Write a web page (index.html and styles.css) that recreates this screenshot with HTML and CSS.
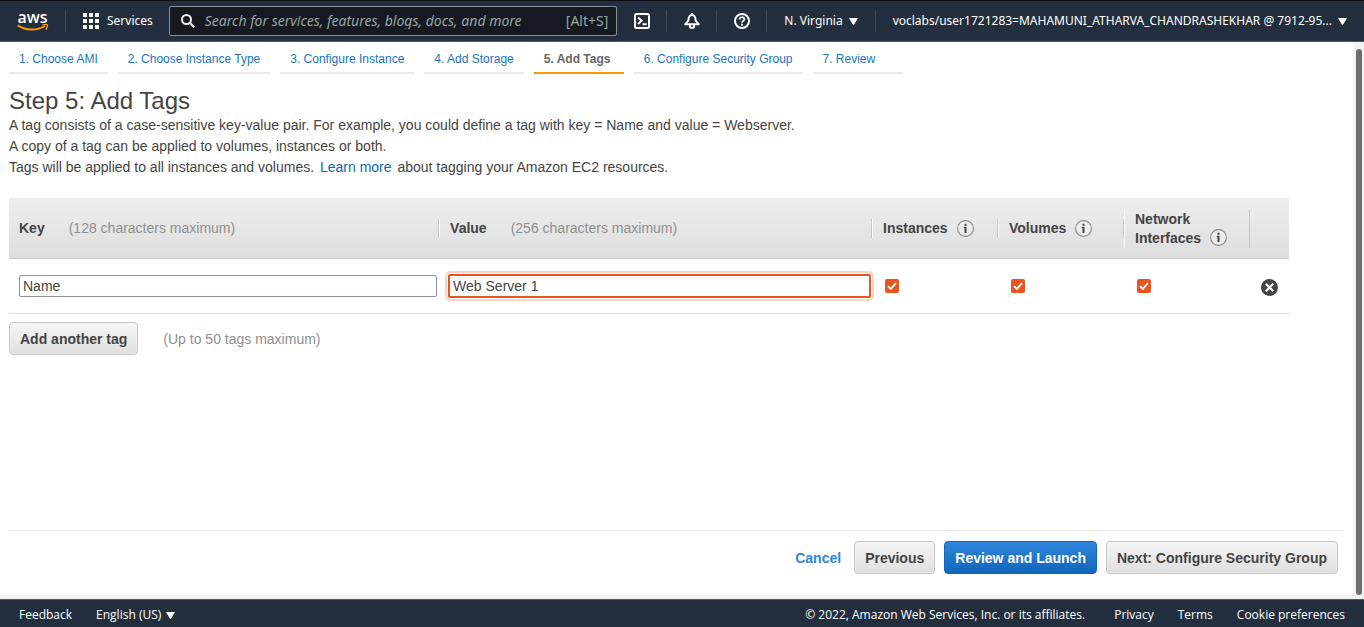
FILE: index.html
```html
<!DOCTYPE html>
<html lang="en">
<head>
<meta charset="utf-8">
<title>Step 5: Add Tags</title>
<link rel="stylesheet" href="styles.css">
</head>
<body>
<svg class="defs" aria-hidden="true">
  <symbol id="info" viewBox="0 0 17 17">
    <circle cx="8.500" cy="8.500" r="7.900" fill="#ececec" stroke="#8c8c8c" stroke-width="1.100"/>
    <path d="M7.500 3.800h2v1.900h-2zM6.900 6.800h2.600v6.200h-2v-5h-.6z" fill="#444"/>
  </symbol>
  <symbol id="caret" viewBox="0 0 9 7"><path d="M0 0h9L5.200 6.500q-.7.800-1.400 0z" fill="currentColor"/></symbol>
</svg>

<header class="topbar">
  <a class="logo" href="#" aria-label="AWS home">
    <svg width="32" height="30" viewBox="0 0 32 30">
      <text x="15.500" y="17" text-anchor="middle" class="logo-text">aws</text>
      <path d="M.8 19.300c8.300 5.500 19 5.600 27.400.7" fill="none" stroke="#f90" stroke-width="2"/>
      <path d="M25.400 19.300c1.700-1 4.100-1 5-.5.400 1.200-.3 3.800-1.800 5" fill="none" stroke="#f90" stroke-width="1.300"/>
    </svg>
  </a>
  <button class="nav-item services">
    <svg width="16" height="16" viewBox="0 0 16 16" fill="#fff"><path d="M0 0h4v4H0zM6 0h4v4H6zM12 0h4v4h-4zM0 6h4v4H0zM6 6h4v4H6zM12 6h4v4h-4zM0 12h4v4H0zM6 12h4v4H6zM12 12h4v4h-4z"/></svg>
    <span>Services</span>
  </button>
  <label class="search">
    <svg width="14" height="14" viewBox="0 0 14 14" fill="none" stroke="#eaeded" stroke-width="2"><circle cx="5.500" cy="5.500" r="4.500"/><path d="M8.800 8.800l4.400 4.400"/></svg>
    <input type="search" aria-label="Search" placeholder="Search for services, features, blogs, docs, and more">
    <span class="shortcut">[Alt+S]</span>
  </label>
  <button class="nav-item icon-item first" aria-label="CloudShell">
    <svg width="16" height="16" viewBox="0 0 16 16" fill="none" stroke="#fff" stroke-width="2"><rect x="1" y="1" width="14" height="14" rx="1.500"/><path d="M4 4.600l3.600 3.200L4 11M8.600 11.300h4"/></svg>
  </button>
  <button class="nav-item icon-item" aria-label="Notifications">
    <svg width="16" height="16" viewBox="0 0 16 16" fill="none" stroke="#fff" stroke-width="1.900"><path d="M1.200 11.200h13.600L11.600 7.600C11.600 4.400 10.400 2 8 2S4.400 4.400 4.400 7.600z" stroke-linejoin="round"/><path d="M8 0v2.400M5.900 11.500v1.700q0 1.700 2.100 1.700t2.100-1.700v-1.700"/></svg>
  </button>
  <button class="nav-item icon-item" aria-label="Help">
    <svg width="16" height="16" viewBox="0 0 16 16" fill="none" stroke="#fff" stroke-width="2"><circle cx="8" cy="8" r="7"/><path d="M5.600 6.500c0-3 4.800-3 4.800-.2C10.400 8 8 7.800 8 9.800M8 10.800v1.900" stroke-width="1.700"/></svg>
  </button>
  <button class="nav-item menu">N. Virginia <svg width="9" height="7"><use href="#caret"/></svg></button>
  <button class="nav-item menu">voclabs/user1721283=MAHAMUNI_ATHARVA_CHANDRASHEKHAR @ 7912-95... <svg width="9" height="7"><use href="#caret"/></svg></button>
</header>

<div class="body-row">
  <main class="page">
    <nav class="steps">
      <a href="#">1. Choose AMI</a>
      <a href="#">2. Choose Instance Type</a>
      <a href="#">3. Configure Instance</a>
      <a href="#">4. Add Storage</a>
      <a href="#" class="current" aria-current="step">5. Add Tags</a>
      <a href="#">6. Configure Security Group</a>
      <a href="#">7. Review</a>
    </nav>
    <h1>Step 5: Add Tags</h1>
    <p>A tag consists of a case-sensitive key-value pair. For example, you could define a tag with key = Name and value = Webserver.</p>
    <p>A copy of a tag can be applied to volumes, instances or both.</p>
    <p>Tags will be applied to all instances and volumes. <a class="learn" href="#">Learn more</a> about tagging your Amazon EC2 resources.</p>

    <table class="tags">
      <colgroup><col class="key-col"><col><col class="check-col"><col class="check-col"><col class="check-col"><col class="remove-col"></colgroup>
      <thead>
        <tr>
          <th><div class="head first"><span>Key</span><span class="hint">(128 characters maximum)</span></div></th>
          <th><div class="head"><span>Value</span><span class="hint">(256 characters maximum)</span></div></th>
          <th><div class="head">Instances<svg class="info" width="17" height="17"><use href="#info"/></svg></div></th>
          <th><div class="head">Volumes<svg class="info" width="17" height="17"><use href="#info"/></svg></div></th>
          <th><div class="head two-line"><span>Network<br>Interfaces</span><svg class="info" width="17" height="17"><use href="#info"/></svg></div></th>
          <th></th>
        </tr>
      </thead>
      <tbody>
        <tr>
          <td class="key-cell"><input class="field" type="text" aria-label="Key" value="Name"></td>
          <td class="value-cell"><input class="field active" type="text" aria-label="Value" value="Web Server 1"></td>
          <td class="check-cell"><input class="check" type="checkbox" aria-label="Instances" checked></td>
          <td class="check-cell"><input class="check" type="checkbox" aria-label="Volumes" checked></td>
          <td class="check-cell"><input class="check" type="checkbox" aria-label="Network Interfaces" checked></td>
          <td class="remove-cell"><button class="remove" aria-label="Remove tag"><svg width="17" height="17" viewBox="0 0 17 17"><circle cx="8.500" cy="8.500" r="8.500" fill="#444"/><path d="M4.800 4.800l7.400 7.400M12.200 4.800l-7.400 7.400" stroke="#fff" stroke-width="2.200"/></svg></button></td>
        </tr>
      </tbody>
    </table>
    <div class="add-row">
      <button class="btn">Add another tag</button>
      <span class="hint">(Up to 50 tags maximum)</span>
    </div>

    <div class="actions">
      <a class="cancel" href="#">Cancel</a>
      <button class="btn">Previous</button>
      <button class="btn primary">Review and Launch</button>
      <button class="btn">Next: Configure Security Group</button>
    </div>
  </main>
  <div class="scroll-track"><div class="scroll-thumb"></div></div>
</div>

<footer class="footer">
  <a href="#">Feedback</a>
  <button class="language">English (US) <svg width="9" height="7"><use href="#caret"/></svg></button>
  <span class="copyright">© 2022, Amazon Web Services, Inc. or its affiliates.</span>
  <a href="#">Privacy</a>
  <a href="#">Terms</a>
  <a href="#">Cookie preferences</a>
</footer>
</body>
</html>
```

FILE: styles.css
```css
* { box-sizing: border-box; }

body {
  margin: 0;
  min-height: 100vh;
  display: flex;
  flex-direction: column;
  background: #fff;
  color: #444;
  font: 14px/21px "Liberation Sans", Arial, sans-serif;
}

button, input { font: inherit; color: inherit; margin: 0; }
button { cursor: pointer; }
a { color: #1166bb; text-decoration: none; }
svg { flex: none; }
.defs { display: none; }

/* top bar */
.topbar {
  display: flex;
  align-items: center;
  height: 42px;
  background: #232f3e;
  border-top: 1px solid #0c0d0f;
  border-bottom: 1px solid #4c5661;
  color: #fff;
  font: 12px/16px "Noto Sans", sans-serif;
}
.logo { display: flex; padding: 0 16px 0 17px; }
.logo svg { overflow: visible; }
.logo-text { font: 600 16px "Open Sans", sans-serif; fill: #fff; }
.nav-item {
  display: flex;
  align-items: center;
  gap: 6px;
  height: 22px;
  padding: 0 16px 0 17px;
  border: 0;
  border-left: 1px solid #414b58;
  background: none;
  white-space: nowrap;
}
.nav-item.services { gap: 8px; }
.nav-item.first { border-left-color: transparent; padding-left: 16px; }
.nav-item.menu { padding-right: 17px; }
.search {
  flex: 1;
  display: flex;
  align-items: center;
  gap: 10px;
  min-width: 0;
  height: 30px;
  padding: 0 8px 0 11px;
  border: 1px solid #879196;
  border-radius: 2px;
  background: #16191f;
  color: #95a5a6;
  font-size: 14px;
}
.search input {
  flex: 1;
  min-width: 0;
  padding: 0;
  border: 0;
  outline: 0;
  background: none;
}
.search input::placeholder { color: #95a5a6; font-style: italic; opacity: 1; }

/* page */
.body-row { flex: 1; display: flex; border-bottom: 4px solid #f2f3f3; }
.page {
  flex: 1;
  min-width: 0;
  display: flex;
  flex-direction: column;
  padding: 6px 10px 21px 9px;
}
.scroll-track { width: 11px; padding: 7px 2px 0 3px; background: #f2f3f3; display: flex; }
.scroll-thumb { flex: 1; border-radius: 3px; background: #6e6e6e; }

.steps { display: flex; gap: 10px; font-size: 12px; line-height: 22px; }
.steps a {
  min-width: 90px;
  height: 26px;
  padding: 0 10px;
  border-bottom: 2px solid #eaeaea;
  color: #1b75bc;
  white-space: nowrap;
}
.steps .current { border-color: #ff9900; color: #666; font-weight: bold; }

h1 { margin: 13px 0 1px; font-size: 24px; line-height: 27px; font-weight: normal; }
p { margin: 0; }
.learn { margin: 0 2px; }

.tags { width: calc(100% - 54px); margin-top: 20px; border-collapse: collapse; table-layout: fixed; }
.key-col { width: 33.6%; }
.check-col { width: 126px; }
.remove-col { width: 39px; }
.tags th {
  height: 60px;
  padding: 2px 0 0;
  border-bottom: 1px solid #c8c8c8;
  text-align: left;
  line-height: 19px;
}
.tags thead tr { background: linear-gradient(#eee, #dedede); }
.head {
  display: flex;
  align-items: center;
  height: 19px;
  padding-left: 10px;
  border-left: 1px solid #fff;
  border-right: 1px solid #c4c4c4;
}
.head.first { border-left: 0; }
.head.two-line { height: 38px; align-items: flex-end; }
.hint { color: #8f8f8f; font-weight: normal; }
.head .hint { margin-left: 24px; }
.info { margin-left: 9px; }
.two-line .info { margin-bottom: 2px; }
.tags td { height: 55px; padding: 0; border-bottom: 1px solid #ddd; vertical-align: middle; }
.tags .key-cell { padding: 0 2px 0 10px; }
.tags .value-cell { padding: 0 1px 0 9px; }
.tags .check-cell { padding-left: 13px; }
.tags .remove-cell { padding-left: 11px; }
.field {
  display: block;
  width: 100%;
  height: 22px;
  padding: 0 3px;
  border: 1px solid #8f8f9d;
  border-radius: 2px;
  background: #fff;
}
.field.active {
  height: 24px;
  border: 2px solid #e95420;
  outline: 0;
  box-shadow: 0 0 0 1px #fff, 0 0 0 3px #fbd4c7;
}
.check {
  appearance: none;
  display: block;
  width: 14px;
  height: 14px;
  border-radius: 2px;
  background: #e95420 url("data:image/svg+xml,%3Csvg xmlns='http://www.w3.org/2000/svg' viewBox='0 0 14 14'%3E%3Cpath d='M3 7.200l2.800 2.700L11 4.200' fill='none' stroke='white' stroke-width='2'/%3E%3C/svg%3E");
}
.remove { display: flex; padding: 3px 0 0; border: 0; background: none; }

.btn {
  height: 33px;
  padding: 2px 10px 0;
  border: 1px solid #c3c3c3;
  border-radius: 4px;
  background: linear-gradient(#f5f5f5, #dfdfdf);
  box-shadow: inset 0 0 0 1px #ffffff55;
  font-weight: bold;
  white-space: nowrap;
}
.btn.primary {
  border-color: #1166bb;
  background: linear-gradient(#2f86dc, #1166bb);
  box-shadow: none;
  color: #fff;
}
.add-row { display: flex; align-items: center; gap: 25px; margin-top: 8px; }
.add-row .hint, .cancel { padding-top: 2px; }
.actions {
  display: flex;
  justify-content: flex-end;
  align-items: center;
  gap: 9px;
  margin-top: auto;
  padding: 10px 5px 0 0;
  border-top: 1px solid #eaeaea;
}
.cancel { margin-right: 4px; color: #2e86de; font-weight: bold; }

/* footer */
.footer {
  display: flex;
  align-items: center;
  gap: 24px;
  height: 28px;
  padding: 3px 19px 0;
  border-top: 1px solid #4c5661;
  background: #232f3e;
  color: #fff;
  font: 12px/16px "Open Sans", sans-serif;
}
.footer a { color: inherit; }
.language { display: flex; align-items: center; gap: 5px; padding: 0; border: 0; background: none; }
.copyright { margin-left: auto; margin-right: 5px; }
```
